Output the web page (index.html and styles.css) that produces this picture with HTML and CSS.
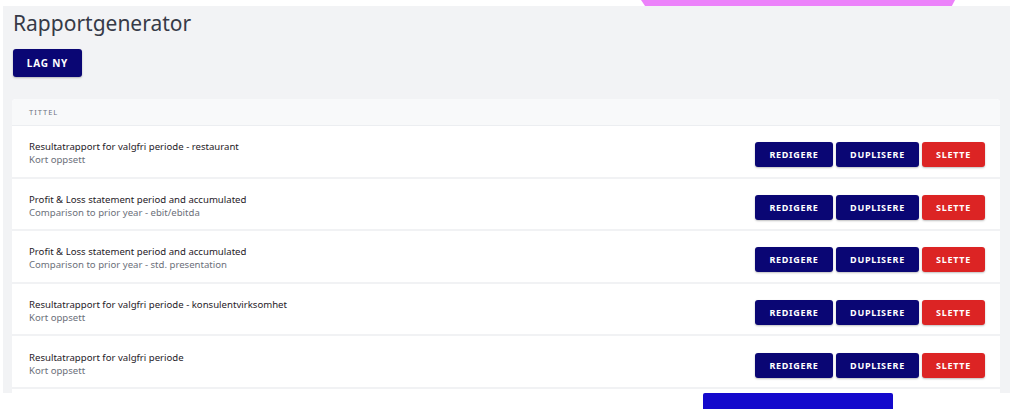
FILE: index.html
```html
<!DOCTYPE html>
<html lang="no">
<head>
<meta charset="utf-8">
<title>Rapportgenerator</title>
<link rel="stylesheet" href="styles.css">
</head>
<body>
<div class="deco-top"></div>
<main class="panel">
  <h1 class="title">Rapportgenerator</h1>
  <button class="btn btn-primary btn-new">LAG NY</button>
  <section class="card">
    <div class="card-head">TITTEL</div>
    <div class="row">
      <div class="row-text">
        <div class="row-title">Resultatrapport for valgfri periode - restaurant</div>
        <div class="row-sub">Kort oppsett</div>
      </div>
      <div class="actions">
        <button class="btn btn-primary btn-edit">REDIGERE</button>
        <button class="btn btn-primary btn-dup">DUPLISERE</button>
        <button class="btn btn-danger btn-del">SLETTE</button>
      </div>
    </div>
    <div class="row">
      <div class="row-text">
        <div class="row-title">Profit &amp; Loss statement period and accumulated</div>
        <div class="row-sub">Comparison to prior year - ebit/ebitda</div>
      </div>
      <div class="actions">
        <button class="btn btn-primary btn-edit">REDIGERE</button>
        <button class="btn btn-primary btn-dup">DUPLISERE</button>
        <button class="btn btn-danger btn-del">SLETTE</button>
      </div>
    </div>
    <div class="row">
      <div class="row-text">
        <div class="row-title">Profit &amp; Loss statement period and accumulated</div>
        <div class="row-sub">Comparison to prior year - std. presentation</div>
      </div>
      <div class="actions">
        <button class="btn btn-primary btn-edit">REDIGERE</button>
        <button class="btn btn-primary btn-dup">DUPLISERE</button>
        <button class="btn btn-danger btn-del">SLETTE</button>
      </div>
    </div>
    <div class="row">
      <div class="row-text">
        <div class="row-title">Resultatrapport for valgfri periode - konsulentvirksomhet</div>
        <div class="row-sub">Kort oppsett</div>
      </div>
      <div class="actions">
        <button class="btn btn-primary btn-edit">REDIGERE</button>
        <button class="btn btn-primary btn-dup">DUPLISERE</button>
        <button class="btn btn-danger btn-del">SLETTE</button>
      </div>
    </div>
    <div class="row">
      <div class="row-text">
        <div class="row-title">Resultatrapport for valgfri periode</div>
        <div class="row-sub">Kort oppsett</div>
      </div>
      <div class="actions">
        <button class="btn btn-primary btn-edit">REDIGERE</button>
        <button class="btn btn-primary btn-dup">DUPLISERE</button>
        <button class="btn btn-danger btn-del">SLETTE</button>
      </div>
    </div>
  </section>
</main>
<div class="deco-bottom"></div>
</body>
</html>
```

FILE: styles.css
```css
* { box-sizing: border-box; }
html, body { margin: 0; padding: 0; background: #ffffff; }
body {
  font-family: "Noto Sans", "Open Sans", sans-serif;
  width: 1014px;
  height: 409px;
  overflow: hidden;
  position: relative;
}
.panel {
  margin: 6px 4px 0 3px;
  height: 387px;
  background: #f2f3f5;
  padding: 4px 10px 0 9px;
  overflow: hidden;
  display: flex;
  flex-direction: column;
  align-items: flex-start;
}
.panel > * { flex-shrink: 0; }
.title {
  margin: 0;
  font-size: 21px;
  font-weight: 400;
  color: #363a47;
  line-height: 26px;
  padding-left: 1px;
}
.btn {
  border: none;
  border-radius: 3px;
  color: #ffffff;
  font-family: "Noto Sans", sans-serif;
  font-weight: 700;
  font-size: 9px;
  letter-spacing: 0.7px;
  cursor: pointer;
  box-shadow: 0 1px 2px rgba(0,0,0,0.25);
  padding: 0;
}
.btn-primary { background: #0a0674; }
.btn-danger { background: #dc2424; }
.btn-new {
  margin-top: 13px;
  margin-left: 1px;
  width: 69px;
  height: 28px;
  font-size: 10px;
  letter-spacing: 0.8px;
}
.card {
  margin-top: 22px;
  align-self: stretch;
  flex-grow: 1;
  background: #ffffff;
  border-radius: 4px 4px 0 0;
}
.card-head {
  height: 27px;
  background: #f8f9fa;
  border-bottom: 1px solid #eceef1;
  border-radius: 4px 4px 0 0;
  padding-left: 17px;
  display: flex;
  align-items: center;
  font-size: 7.5px;
  letter-spacing: 1px;
  color: #6b7080;
}
.row {
  height: 52.6px;
  border-bottom: 2px solid #f1f2f4;
  display: flex;
  align-items: center;
  justify-content: space-between;
  padding: 0 15px 0 17px;
}
.row-text { padding-top: 4px; }
.row-title {
  font-size: 9.6px;
  font-weight: 400;
  color: #1f2128;
  line-height: 13px;
}
.row-sub {
  font-size: 9.6px;
  color: #6c707a;
  line-height: 13px;
}
.actions {
  display: flex;
  gap: 3px;
  padding-top: 7px;
}
.actions .btn { height: 25px; }
.btn-edit { width: 78px; }
.btn-dup { width: 83px; }
.btn-del { width: 63px; }
.deco-top {
  position: absolute;
  top: 0;
  left: 641px;
  width: 314px;
  height: 6px;
  background: #ec82fa;
  clip-path: polygon(0 0, 100% 0, 99% 100%, 1.3% 100%);
}
.deco-bottom {
  position: absolute;
  top: 393px;
  left: 703px;
  width: 190px;
  height: 16px;
  background: #1409cc;
  border-radius: 2px 2px 0 0;
}
```
